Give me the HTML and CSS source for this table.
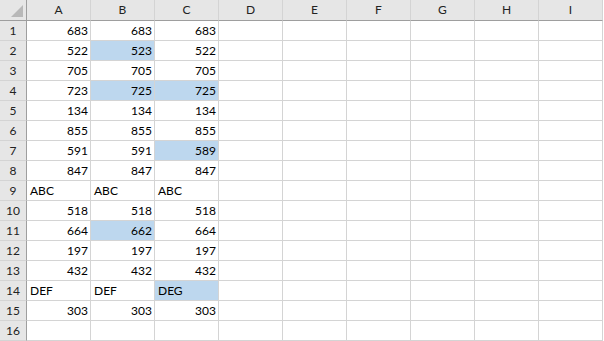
FILE: index.html
```html
<!DOCTYPE html>
<html lang="en">

<head>
    <meta charset="UTF-8">
    <meta name="viewport" content="width=device-width, initial-scale=1.0">
    <title>Compare Columns</title>
    <link rel="stylesheet" href="styles.css">
</head>

<body>
    <div class="sheet">
        <!-- column headers -->
        <div class="corner">
            <svg width="12" height="12" viewBox="0 0 12 12"><polygon points="12,0 12,12 0,12" fill="#b8b8b8"/></svg>
        </div>
        <div class="col-head">A</div>
        <div class="col-head">B</div>
        <div class="col-head">C</div>
        <div class="col-head">D</div>
        <div class="col-head">E</div>
        <div class="col-head">F</div>
        <div class="col-head">G</div>
        <div class="col-head">H</div>
        <div class="col-head">I</div>

        <div class="row-head">1</div>
        <div class="cell num">683</div><div class="cell num">683</div><div class="cell num">683</div>
        <div class="cell"></div><div class="cell"></div><div class="cell"></div><div class="cell"></div><div class="cell"></div><div class="cell"></div>

        <div class="row-head">2</div>
        <div class="cell num">522</div><div class="cell num diff">523</div><div class="cell num">522</div>
        <div class="cell"></div><div class="cell"></div><div class="cell"></div><div class="cell"></div><div class="cell"></div><div class="cell"></div>

        <div class="row-head">3</div>
        <div class="cell num">705</div><div class="cell num">705</div><div class="cell num">705</div>
        <div class="cell"></div><div class="cell"></div><div class="cell"></div><div class="cell"></div><div class="cell"></div><div class="cell"></div>

        <div class="row-head">4</div>
        <div class="cell num">723</div><div class="cell num diff">725</div><div class="cell num diff">725</div>
        <div class="cell"></div><div class="cell"></div><div class="cell"></div><div class="cell"></div><div class="cell"></div><div class="cell"></div>

        <div class="row-head">5</div>
        <div class="cell num">134</div><div class="cell num">134</div><div class="cell num">134</div>
        <div class="cell"></div><div class="cell"></div><div class="cell"></div><div class="cell"></div><div class="cell"></div><div class="cell"></div>

        <div class="row-head">6</div>
        <div class="cell num">855</div><div class="cell num">855</div><div class="cell num">855</div>
        <div class="cell"></div><div class="cell"></div><div class="cell"></div><div class="cell"></div><div class="cell"></div><div class="cell"></div>

        <div class="row-head">7</div>
        <div class="cell num">591</div><div class="cell num">591</div><div class="cell num diff">589</div>
        <div class="cell"></div><div class="cell"></div><div class="cell"></div><div class="cell"></div><div class="cell"></div><div class="cell"></div>

        <div class="row-head">8</div>
        <div class="cell num">847</div><div class="cell num">847</div><div class="cell num">847</div>
        <div class="cell"></div><div class="cell"></div><div class="cell"></div><div class="cell"></div><div class="cell"></div><div class="cell"></div>

        <div class="row-head">9</div>
        <div class="cell">ABC</div><div class="cell">ABC</div><div class="cell">ABC</div>
        <div class="cell"></div><div class="cell"></div><div class="cell"></div><div class="cell"></div><div class="cell"></div><div class="cell"></div>

        <div class="row-head">10</div>
        <div class="cell num">518</div><div class="cell num">518</div><div class="cell num">518</div>
        <div class="cell"></div><div class="cell"></div><div class="cell"></div><div class="cell"></div><div class="cell"></div><div class="cell"></div>

        <div class="row-head">11</div>
        <div class="cell num">664</div><div class="cell num diff">662</div><div class="cell num">664</div>
        <div class="cell"></div><div class="cell"></div><div class="cell"></div><div class="cell"></div><div class="cell"></div><div class="cell"></div>

        <div class="row-head">12</div>
        <div class="cell num">197</div><div class="cell num">197</div><div class="cell num">197</div>
        <div class="cell"></div><div class="cell"></div><div class="cell"></div><div class="cell"></div><div class="cell"></div><div class="cell"></div>

        <div class="row-head">13</div>
        <div class="cell num">432</div><div class="cell num">432</div><div class="cell num">432</div>
        <div class="cell"></div><div class="cell"></div><div class="cell"></div><div class="cell"></div><div class="cell"></div><div class="cell"></div>

        <div class="row-head">14</div>
        <div class="cell">DEF</div><div class="cell">DEF</div><div class="cell diff">DEG</div>
        <div class="cell"></div><div class="cell"></div><div class="cell"></div><div class="cell"></div><div class="cell"></div><div class="cell"></div>

        <div class="row-head">15</div>
        <div class="cell num">303</div><div class="cell num">303</div><div class="cell num">303</div>
        <div class="cell"></div><div class="cell"></div><div class="cell"></div><div class="cell"></div><div class="cell"></div><div class="cell"></div>

        <div class="row-head">16</div>
        <div class="cell"></div><div class="cell"></div><div class="cell"></div>
        <div class="cell"></div><div class="cell"></div><div class="cell"></div><div class="cell"></div><div class="cell"></div><div class="cell"></div>
    </div>
</body>

</html>
```

FILE: styles.css
```css
body {
    margin: 0;
    background: #fff;
    font: 12px "Lato", "Liberation Sans", sans-serif;
    color: #000;
}

.sheet {
    display: grid;
    grid-template-columns: 27px repeat(9, 64px);
    grid-template-rows: 21px repeat(16, 20px);
    width: 603px;
}

.sheet > div {
    box-sizing: border-box;
    border-right: 1px solid #d4d4d4;
    border-bottom: 1px solid #d4d4d4;
    white-space: nowrap;
    overflow: hidden;
}

.corner {
    display: flex;
    align-items: flex-end;
    justify-content: flex-end;
    padding: 0 3px 3px 0;
    background: #e6e6e6;
}

.corner svg {
    display: block;
}

.sheet > .corner,
.sheet > .col-head {
    border-bottom-color: #9e9e9e;
}

.sheet > .corner,
.sheet > .row-head {
    border-right-color: #9e9e9e;
}

.col-head {
    background: #e6e6e6;
    text-align: center;
    line-height: 20px;
    color: #222;
}

.row-head {
    background: #e6e6e6;
    text-align: center;
    line-height: 18px;
    padding-top: 1px;
    color: #222;
}

.cell {
    line-height: 18px;
    padding: 1px 3px 0 3px;
}

.num {
    text-align: right;
    padding-right: 2px;
}

.diff {
    background: #bdd7ee;
}
```
